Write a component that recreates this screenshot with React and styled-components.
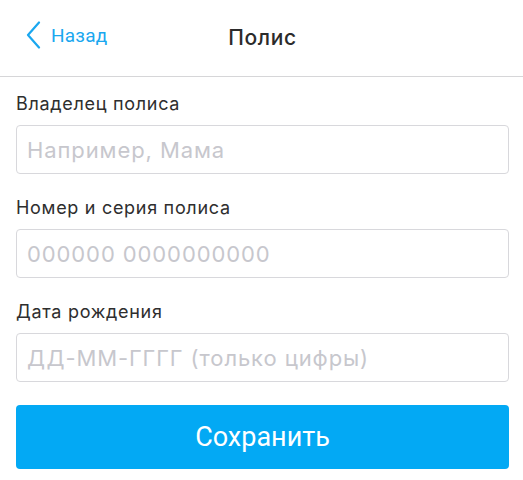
import React from "react";
import styled, { createGlobalStyle } from "styled-components";

const GlobalStyle = createGlobalStyle`
  * {
    box-sizing: border-box;
  }

  body {
    margin: 0;
    background: #fff;
    font-family: Inter, Roboto, sans-serif;
  }
`;

const fields = [
  { label: "Владелец полиса", placeholder: "Например, Мама" },
  { label: "Номер и серия полиса", placeholder: "000000 0000000000" },
  { label: "Дата рождения", placeholder: "ДД-ММ-ГГГГ (только цифры)" },
];

const App = () => {
  return (
    <>
      <GlobalStyle />
      <Page>
        <Header>
          <BackButton type="button">
            <svg width="15" height="28" viewBox="0 0 15 28" fill="none">
              <polyline
                points="13,1.5 2,14 13,26.5"
                stroke="#1aa7ef"
                strokeWidth="2.2"
                strokeLinecap="round"
                strokeLinejoin="round"
              />
            </svg>
            <span>Назад</span>
          </BackButton>
          <Title>Полис</Title>
        </Header>

        <Form>
          {fields.map((f) => (
            <Field key={f.label}>
              <Label>{f.label}</Label>
              <Input placeholder={f.placeholder} />
            </Field>
          ))}
          <SaveButton type="button">Сохранить</SaveButton>
        </Form>
      </Page>
    </>
  );
};

const Page = styled.div`
  width: 523px;
  min-height: 480px;
  background: #fff;
`;

//----HEADER----
const Header = styled.header`
  position: relative;
  display: flex;
  align-items: center;
  justify-content: center;
  height: 77px;
  border-bottom: 1px solid #d6d6d8;
`;

const BackButton = styled.button`
  position: absolute;
  left: 26px;
  top: 21px;
  display: flex;
  align-items: center;
  gap: 10px;
  padding: 0;
  border: none;
  background: none;
  color: #1aa7ef;
  font-family: Roboto, sans-serif;
  font-size: 19px;
  letter-spacing: 0.2px;
  cursor: pointer;

  span {
    margin-top: 1px;
  }
`;

const Title = styled.h1`
  margin: 0 0 1px 2px;
  font-family: Inter, Roboto, sans-serif;
  font-size: 21px;
  font-weight: 500;
  letter-spacing: 0.6px;
  color: #2b2b2b;
`;

//----FORM----
const Form = styled.div`
  display: flex;
  flex-direction: column;
  padding: 15px 14px 0 16px;
`;

const Field = styled.div`
  display: flex;
  flex-direction: column;
  gap: 9px;
  margin-bottom: 22px;
`;

const Label = styled.label`
  font-family: Inter, Roboto, sans-serif;
  font-size: 18px;
  line-height: 24px;
  letter-spacing: 0.7px;
  color: #2e2e2e;
`;

const Input = styled.input`
  height: 49px;
  width: 100%;
  padding: 0 10px;
  border: 1px solid #d8d8dc;
  border-radius: 4px;
  font-family: Inter, Roboto, sans-serif;
  font-size: 22px;
  letter-spacing: 0.9px;
  color: #333;
  outline: none;

  &::placeholder {
    color: #c7c7cd;
  }
`;

const SaveButton = styled.button`
  height: 64px;
  width: 100%;
  margin-top: 1px;
  border: none;
  border-radius: 4px;
  background: #03a9f4;
  color: #fff;
  font-family: Roboto, sans-serif;
  font-size: 27px;
  cursor: pointer;
`;

export default App;
